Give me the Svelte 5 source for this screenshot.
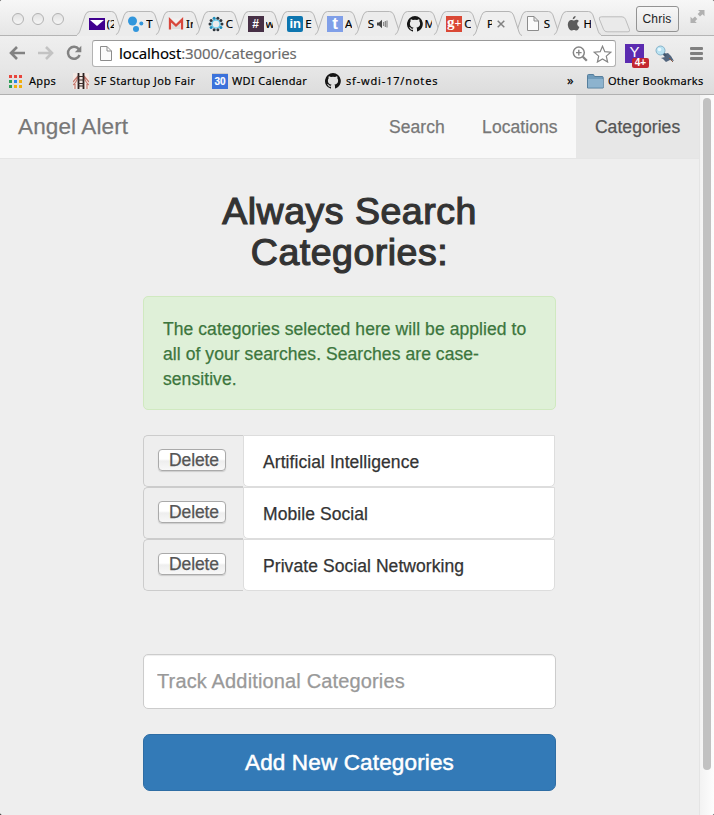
<script>
  const tabs = [
    { icon: 'mail', label: '(2' },
    { icon: 'dots', label: 'T' },
    { icon: 'gmail', label: 'In' },
    { icon: 'ring', label: 'C' },
    { icon: 'hash', label: 'w' },
    { icon: 'linkedin', label: 'E' },
    { icon: 'tumblr', label: 'A' },
    { icon: 'audio', label: 'S' },
    { icon: 'github', label: 'M' },
    { icon: 'gplus', label: 'C' },
    { icon: 'none', label: 'P', active: true },
    { icon: 'page', label: 'S' },
    { icon: 'apple', label: 'H' }
  ];
  const categories = ['Artificial Intelligence', 'Mobile Social', 'Private Social Networking'];
  const apps = ['#e8453c', '#e8453c', '#e8453c', '#2f9e57', '#2c86e8', '#f2ae0c', '#2f9e57', '#f2ae0c', '#f2ae0c'];
  const ringDots = Array.from({ length: 10 }, (_, i) => (i * Math.PI) / 5);
</script>

{#snippet github()}
  <svg width="16" height="16" viewBox="0 0 16 16"><path fill="#161616" d="M8 0a8 8 0 0 0-2.500 15.600c.4.1.5-.2.5-.4v-1.500c-2.200.5-2.700-1-2.700-1-.4-.9-.9-1.200-.9-1.200-.7-.5.1-.5.1-.5.8.1 1.200.8 1.200.8.7 1.300 1.900.9 2.300.7.1-.5.3-.9.5-1.100-1.800-.2-3.600-.9-3.600-4 0-.9.3-1.600.8-2.100-.1-.2-.4-1 .1-2.100 0 0 .7-.2 2.200.8a7.700 7.700 0 0 1 4 0c1.500-1 2.200-.8 2.200-.8.4 1.100.2 1.900.1 2.100.5.6.8 1.300.8 2.100 0 3.100-1.900 3.800-3.700 4 .3.300.6.800.6 1.500v2.200c0 .2.1.5.6.4A8 8 0 0 0 8 0z" /></svg>
{/snippet}

{#snippet page()}
  <svg width="12" height="15" viewBox="0 0 12 15"><path d="M.5.5h6.500l4.500 4.500v9.500H.5zM7 .5V5h4.500" fill="#fbfbfb" stroke="#8c8c8c" /></svg>
{/snippet}

<div class="window">
  <div class="strip">
    <div class="lights"><i></i><i></i><i></i></div>
    <div class="tabs">
      {#each tabs as tab}
        <div class="tab" class:active={tab.active}>
          <svg class="shape" width="49" height="26" viewBox="0 0 49 26">
            <path d="M0 24.500Q2 24 3 21L8.500 4.500Q10 .5 13 .5H36Q39 .5 40.500 4L46 21Q47 24.500 49 24.500V26H0z" class="fill" />
            <path d="M0 24.500Q2 24 3 21L8.500 4.500Q10 .5 13 .5H36Q39 .5 40.500 4L46 21Q47 24.500 49 24.500" class="edge" />
          </svg>
          {#if tab.icon === 'mail'}
            <svg class="ico" width="16" height="16" viewBox="0 0 16 16"><path d="M0 2h16v12H0z" fill="#40008f" /><path d="M1 4h14l-7 6z" fill="#fff" /></svg>
          {:else if tab.icon === 'dots'}
            <svg class="ico" width="16" height="16" viewBox="0 0 16 16"><g fill="#3296dc"><circle cx="4.500" cy="5" r="4.500" /><circle cx="13.300" cy="7.500" r="2" /><circle cx="8" cy="13" r="3" /></g></svg>
          {:else if tab.icon === 'gmail'}
            <svg class="ico" width="16" height="16" viewBox="0 0 16 16"><path d="M1 2.500h14v11H1z" fill="#f1f0f0" /><path d="M4 13V7l4 3.500L12 7v6" fill="#ddd" /><path d="M2 13.500V3.800l6 5.700 6-5.700v9.700" fill="none" stroke="#d8463b" stroke-width="2.300" /></svg>
          {:else if tab.icon === 'ring'}
            <svg class="ico" width="16" height="16" viewBox="0 0 16 16">
              <circle cx="8" cy="8" r="4.100" fill="none" stroke="#6fcdec" stroke-width="1.500" />
              {#each ringDots as a, i}<circle cx={8 + 6 * Math.cos(a)} cy={8 + 6 * Math.sin(a)} r="1.500" fill={i % 3 === 1 ? '#1e8ebb' : '#303840'} />{/each}
            </svg>
          {:else if tab.icon === 'hash'}
            <span class="ico sq hash">#</span>
          {:else if tab.icon === 'linkedin'}
            <span class="ico sq linkedin">in</span>
          {:else if tab.icon === 'tumblr'}
            <span class="ico sq tumblr">t</span>
          {:else if tab.icon === 'github'}
            <span class="ico">{@render github()}</span>
          {:else if tab.icon === 'gplus'}
            <span class="ico sq gplus">g<small>+</small></span>
          {:else if tab.icon === 'page'}
            <span class="ico slim">{@render page()}</span>
          {:else if tab.icon === 'apple'}
            <svg class="ico" width="16" height="16" viewBox="0 0 16 16"><path fill="#5c5c5c" d="M9.600 0c.1 1.900-1.300 3.300-2.900 3.300C6.500 1.700 8 .2 9.600 0zM7.600 4.600c.9 0 1.500-.8 2.700-.8 1.100 0 2 .5 2.600 1.300-2.500 1.600-2 4.800.500 5.900-.6 1.700-1.800 3.500-3 3.500-1 0-1.300-.6-2.500-.6s-1.500.6-2.500.6C3.600 14.500 1.800 11.300 1.800 8.500c0-2.700 1.700-4.500 3.500-4.500 1.100 0 1.800.6 2.300.6z" /></svg>
          {/if}
          <span class="label" class:lead={tab.icon === 'audio' || tab.icon === 'none'}>{tab.label}</span>
          {#if tab.icon === 'audio'}
            <svg class="after" width="11" height="10" viewBox="0 0 11 10"><path d="M0 3.500h2L5 .8v8.400L2 6.500H0z" fill="#444" /><path d="M6.700 3v4M8.300 2v6M10 1.500v7" stroke="#666" stroke-width=".9" /></svg>
          {:else if tab.active}
            <svg class="after" width="8" height="8" viewBox="0 0 8 8"><path d="M.7.7l6.600 6.600M7.300.7L.7 7.300" stroke="#808080" stroke-width="1.500" /></svg>
          {/if}
        </div>
      {/each}
    </div>
    <svg class="newtab" width="33" height="17" viewBox="0 0 33 17"><path d="M3.500.8H24q2.500 0 3.500 2.500l4 10.500q.6 2-1.500 2H9q-2.500 0-3.500-2.500L1.300 3Q.7.8 3.500.8z" fill="#eaeaea" stroke="#bdbdbd" /></svg>
    <button class="user">Chris</button>
    <svg class="full" width="15" height="15" viewBox="0 0 15 15" fill="#b1b1b1"><path d="M8 1h6.500v6.200l-2-2-2.500 2.300L7.600 5 10 2.800zM.5 7.800l2 2L5 7.500 7.300 10 5 12.200 6.800 14H.5z" /></svg>
  </div>

  <div class="toolbar">
    <svg class="back" width="17" height="14" viewBox="0 0 17 14"><path d="M8 1L2 7l6 6M2.500 7H16" fill="none" stroke="#828282" stroke-width="2.600" /></svg>
    <svg class="fwd" width="17" height="14" viewBox="0 0 17 14"><path d="M9 1l6 6-6 6M14.500 7H1" fill="none" stroke="#c3c3c3" stroke-width="2.600" /></svg>
    <svg class="reload" width="16" height="16" viewBox="0 0 16 16"><path d="M12.800 4.200A6 6 0 1 0 13.600 10" fill="none" stroke="#828282" stroke-width="2.500" /><path d="M15.300.8v6.500H8.800z" fill="#828282" /></svg>
    <div class="omnibox">
      {@render page()}
      <span class="url"><b>localhost</b>:3000/categories</span>
      <svg class="mag" width="16" height="16" viewBox="0 0 16 16"><circle cx="6.800" cy="6.600" r="5.500" fill="none" stroke="#858585" stroke-width="1.500" /><path d="M4 6.600h5.600M6.800 3.800v5.600" stroke="#858585" stroke-width="1.400" /><path d="M10.800 10.700l4 4" stroke="#858585" stroke-width="2.300" /></svg>
      <svg width="19" height="18" viewBox="0 0 19 18"><path d="M9.500 1.200l2.300 5.500 6 .5-4.500 3.900 1.300 5.900-5.100-3.100L4.400 17l1.300-5.900L1.200 7.200l6-.5z" fill="#fff" stroke="#858585" stroke-width="1.200" /></svg>
    </div>
    <div class="yahoo">Y<em>4+</em></div>
    <svg class="bird" width="20" height="19" viewBox="0 0 20 19"><path d="M8 9l5-1 3 3 3 5-4-1-4 2-3-3-2-1 4-1z" fill="#53667e" /><path d="M14 13l4 4" stroke="#8b5944" /><path d="M8 8l3 3" stroke="#465970" stroke-width="2.500" /><circle cx="5.500" cy="5.500" r="4.500" fill="#b9e2f2" stroke="#87b3c9" /><circle cx="4.500" cy="4.500" r="1.800" fill="#e6f7fd" /></svg>
    <div class="menu"><i></i><i></i><i></i></div>
  </div>

  <div class="bookmarks">
    <div class="bm apps"><span class="grid">{#each apps as color}<i style="background:{color}"></i>{/each}</span><span>Apps</span></div>
    <div class="bm fair">
      <svg width="16" height="16" viewBox="0 0 16 16"><path d="M0 0h16v16H0z" fill="#f3e9e5" /><path d="M5 3Q4 9 0 12M11 3q1 6 5 9M0 9l5-6M16 9l-5-6M2 11v5M14 11v5" fill="none" stroke="#c77b70" stroke-width="1.200" /><path d="M5.500 0v16M10.500 0v16" stroke="#292020" stroke-width="1.800" /><path d="M5 3.500h6M5 7h6M5 10.500h6M5 13h6" stroke="#3a2b29" stroke-width="1.200" /></svg>
      <span>SF Startup Job Fair</span>
    </div>
    <div class="bm cal"><span class="day">30</span><span>WDI Calendar</span></div>
    <div class="bm notes">{@render github()}<span>sf-wdi-17/notes</span></div>
    <span class="more">»</span>
    <div class="bm other">
      <svg width="17" height="15" viewBox="0 0 17 15"><path d="M.5 3V1.500q0-1 1-1H6q1 0 1 1l.5 1H15q1.200 0 1.200 1V14H.5z" fill="#6f9bbb" stroke="#557e9c" /><path d="M1 5h15v8.500H1z" fill="#8db3ce" /></svg>
      <span>Other Bookmarks</span>
    </div>
  </div>

  <div class="view">
    <div class="content">
      <nav>
        <a class="brand" href="#top">Angel Alert</a>
        <div class="links"><a href="#search">Search</a><a href="#locations">Locations</a><a class="on" href="#categories">Categories</a></div>
      </nav>
      <main>
        <h2>Always Search Categories:</h2>
        <div class="alert">The categories selected here will be applied to all of your searches. Searches are case-sensitive.</div>
        <div class="list">
          {#each categories as name}
            <div class="row"><div class="addon"><button>Delete</button></div><div class="name">{name}</div></div>
          {/each}
        </div>
        <input placeholder="Track Additional Categories" />
        <button class="add">Add New Categories</button>
      </main>
    </div>
    <div class="scroll"><div class="thumb"></div></div>
  </div>
</div>

<style>
  :global(body) { background: #000; }
  .window { width: 714px; height: 815px; display: flex; flex-direction: column; overflow: hidden; border-radius: 2px; background: #eee; font-family: 'Liberation Sans', Arial, sans-serif; }
  svg { display: block; flex: none; }
  a { text-decoration: none; }

  .strip { height: 36px; flex: none; box-sizing: border-box; display: flex; background: linear-gradient(#f7f7f7, #e6e6e6); border-bottom: 1px solid #b4b4b4; font-family: 'Noto Sans', 'DejaVu Sans', sans-serif; }
  .lights { box-sizing: border-box; display: flex; gap: 8px; padding: 13px 0 0 12px; width: 75.5px; flex: none; }
  .lights i { width: 12px; height: 12px; flex: none; box-sizing: border-box; border: 1px solid #b2b2b2; border-radius: 50%; background: linear-gradient(#e2e2e2, #f6f6f6); }
  .tabs { display: flex; width: 517px; flex: none; padding-top: 11px; }
  .tab { position: relative; width: 39.75px; flex: none; height: 25px; display: flex; align-items: flex-start; }
  .shape { position: absolute; left: 0; top: 0; }
  .fill { fill: #ececec; }
  .edge { fill: none; stroke: #b4b4b4; }
  .tab:not(.active) .shape { height: 25px; }
  .active { z-index: 1; }
  .active .fill { fill: #efefef; }
  .ico { position: relative; margin: 5px 0 0 13px; width: 16px; height: 16px; flex: none; display: block; }
  .slim { padding-left: 1px; width: 15px; }
  .label { position: relative; margin: 6px 0 0 2px; width: 7px; flex: none; overflow: hidden; white-space: nowrap; font-size: 11.500px; line-height: 14px; color: #000; -webkit-text-stroke: .2px #000; }
  .label.lead { margin-left: 14px; width: 6px; }
  .active .label { width: 5px; }
  .after { position: relative; margin: 8px 0 0 3px; }
  .active .after { margin: 9px 0 0 5px; }
  .sq { color: #fff; text-align: center; font: bold 12px/16px 'Liberation Sans', sans-serif; }
  .hash { background: #473046; }
  .linkedin { background: #0e76b0; border-radius: 2px; font-size: 13px; }
  .tumblr { background: #809fe8; font-size: 17px; line-height: 15px; }
  .gplus { background: #da4835; font: bold 15px/12px 'Liberation Serif', serif; white-space: nowrap; }
  .gplus small { font-size: 12px; }
  .newtab { margin: 16px 0 0 5px; }
  .user { margin: 6px 0 0 5px; width: 43px; height: 26px; padding: 0; box-sizing: border-box; border: 1px solid #939393; border-radius: 3px; background: linear-gradient(#f7f7f7, #e5e5e5); color: #222; font: 12px 'Liberation Sans', sans-serif; flex: none; letter-spacing: .2px; }
  .full { margin: 9px 0 0 11px; }

  .toolbar { height: 34px; flex: none; display: flex; background: linear-gradient(#efefef, #e6e6e6); }
  .back { margin: 10px 0 0 9px; }
  .fwd { margin: 10px 0 0 11px; }
  .reload { margin: 9px 0 0 12px; }
  .omnibox { margin: 4px 0 0 10px; width: 524px; height: 27px; box-sizing: border-box; flex: none; display: flex; align-items: center; padding: 0 3px 0 7px; border: 1px solid #b3b3b3; border-top-color: #999; border-radius: 3px; background: #fff; }
  .url { flex: 1; padding-left: 7px; color: #6b6b6b; font: 15px/22px 'Noto Sans', sans-serif; height: 24px; letter-spacing: -.13px; -webkit-text-stroke: .15px; }
  .url b { font-weight: 400; color: #000; }
  .mag { margin-right: 5px; }
  .yahoo { position: relative; margin: 8px 0 0 9px; width: 19px; height: 19px; flex: none; background: #5b2bb0; color: #fff; text-align: center; font: 15px/15px 'Liberation Sans', sans-serif; }
  .yahoo em { position: absolute; left: 7px; top: 14px; width: 17px; height: 10px; border-radius: 2px; background: #c32830; font: bold 10px/10px 'Liberation Sans', sans-serif; }
  .bird { margin: 9px 0 0 11px; }
  .menu { margin: 11px 0 0 15px; width: 13px; display: flex; flex-direction: column; gap: 2px; }
  .menu i { height: 3px; border-radius: 1px; background: #808080; }

  .bookmarks { height: 25px; box-sizing: border-box; flex: none; display: flex; background: linear-gradient(#e6e6e6, #dcdcdc); border-bottom: 1px solid #b0b0b0; color: #000; font: 11px/22px 'Noto Sans', sans-serif; -webkit-text-stroke: .15px; }
  .bm { display: flex; align-items: center; height: 22px; flex: none; white-space: nowrap; }
  .apps { margin-left: 9px; width: 64px; gap: 7px; letter-spacing: .3px; }
  .grid { display: grid; grid-template-columns: repeat(3, 3px); grid-auto-rows: 3px; gap: 2px; }
  .fair { width: 139px; gap: 5px; letter-spacing: .37px; }
  .cal { width: 113px; gap: 4px; letter-spacing: .32px; }
  .day { width: 16px; height: 16px; background: #3b72db; border-top: 1px solid #ccc; box-sizing: border-box; color: #fff; text-align: center; letter-spacing: 0; font: bold 10px/15px 'Liberation Sans', sans-serif; }
  .notes { gap: 5px; letter-spacing: .82px; }
  .more { margin-left: auto; width: 20px; font-size: 13px; line-height: 20px; }
  .other { width: 127px; gap: 4px; letter-spacing: .27px; }

  .view { flex: 1; display: flex; min-height: 0; }
  .content { width: 699px; flex: none; }
  nav { height: 64px; box-sizing: border-box; display: flex; justify-content: space-between; background: #f8f8f8; border-bottom: 1px solid #e5e5e5; line-height: 63px; -webkit-text-stroke: .25px; }
  nav a { color: #777; }
  .brand { padding-left: 18px; font-size: 22.5px; letter-spacing: .13px; }
  .links { display: flex; font-size: 17.5px; letter-spacing: .07px; }
  .links a { padding: 0 18.750px 0 18.500px; line-height: 64px; }
  .links .on { background: #e7e7e7; color: #555; }
  main { width: 413px; margin-left: 143px; display: flex; flex-direction: column; }
  h2 { margin: 32px 0 23px; text-align: center; font-size: 37.5px; font-weight: 400; line-height: 41px; color: #333; -webkit-text-stroke: 1.2px #333; letter-spacing: .5px; }
  .alert { box-sizing: border-box; height: 114px; border: 1px solid #d0e9c0; border-radius: 5px; background: #dff0d8; color: #3c763d; padding: 20px 10px 0 19px; font-size: 17.5px; line-height: 25px; letter-spacing: .07px; -webkit-text-stroke: .25px; }
  .list { margin-top: 25px; width: 412px; -webkit-text-stroke: .25px; }
  .row { display: flex; height: 52px; }
  .addon { width: 100px; box-sizing: border-box; border: 1px solid #ccc; border-right: 0; border-radius: 5px 0 0 5px; padding: 13px 0 0 14px; }
  .addon button { display: block; width: 68px; height: 22px; box-sizing: border-box; border: 1px solid #aaa; border-radius: 4px; padding: 0 0 0 4px; background: linear-gradient(#fff 0 45%, #eee 55%, #f8f8f8); box-shadow: 0 1px 1px #ccc; color: #555; font: 17.5px/21px 'Liberation Sans', sans-serif; letter-spacing: -.1px; -webkit-text-stroke: .25px; }
  .name { flex: 1; box-sizing: border-box; border: 1px solid #ddd; border-radius: 0 0 5px 5px; background: #fff; color: #333; padding-left: 19px; font-size: 17.5px; line-height: 52px; letter-spacing: .07px; }
  input { margin: 63px 0 0; width: 413px; height: 55px; box-sizing: border-box; border: 1px solid #ccc; border-radius: 5px; padding: 0 13px 1px; background: #fff; box-shadow: inset 0 1px 1px rgba(0, 0, 0, .07); font: 20px 'Liberation Sans', sans-serif; letter-spacing: .15px; -webkit-text-stroke: .25px; }
  input::placeholder { color: #999; opacity: 1; }
  .add { margin-top: 25px; height: 57px; border: 1px solid #2e6da4; border-radius: 7px; background: #337ab7; color: #fff; font: 22.5px 'Liberation Sans', sans-serif; -webkit-text-stroke: .5px #fff; letter-spacing: .15px; }
  .scroll { flex: 1; box-sizing: border-box; border-left: 1px solid #e4e4e4; background: linear-gradient(90deg, #f3f3f3, #fdfdfd); padding: 3px 0 0 3px; }
  .thumb { width: 8px; height: 672px; border-radius: 4px; background: #c1c1c1; }
</style>
